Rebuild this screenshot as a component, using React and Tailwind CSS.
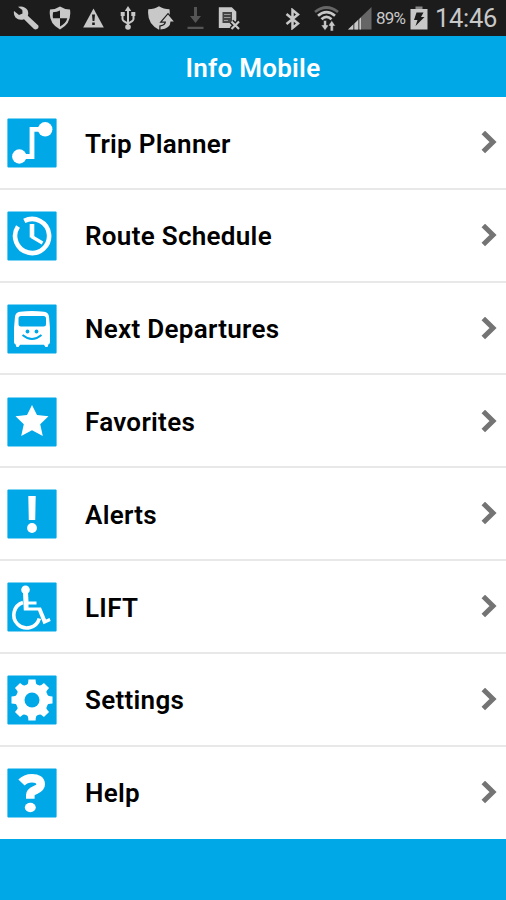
const items = [
  { label: "Trip Planner", icon: TripIcon },
  { label: "Route Schedule", icon: ClockIcon },
  { label: "Next Departures", icon: BusIcon },
  { label: "Favorites", icon: StarIcon },
  { label: "Alerts", icon: AlertIcon },
  { label: "LIFT", icon: WheelchairIcon },
  { label: "Settings", icon: GearIcon },
  { label: "Help", icon: HelpIcon },
];

function TripIcon() {
  return (
    <>
      <path d="M12 38.500h13V11.300H38" fill="none" stroke="#fff" strokeWidth="4.800" />
      <circle cx="12.300" cy="38.500" r="7.200" fill="#fff" />
      <circle cx="38.200" cy="11.300" r="7.200" fill="#fff" />
    </>
  );
}

function ClockIcon() {
  return (
    <g fill="none" stroke="#fff">
      <path d="M17.300 9.900A17 17 0 1 1 11 15.500" strokeWidth="4.600" />
      <path d="M25 13v13.500" strokeWidth="4.600" />
      <path d="M24.500 25.500l11 6.500" strokeWidth="3.200" />
    </g>
  );
}

function BusIcon() {
  return (
    <>
      <path
        d="M13 7.800Q25 6 37 7.800Q41.500 8.500 42 12.500L43 24V38Q43 40 41.500 40.300L40.500 43H38.500L37 40.800H13L11.500 43H9.500L8.500 40.300Q7 40 7 38V24L8 12.500Q8.500 8.500 13 7.800Z"
        fill="#fff"
      />
      <rect x="11.500" y="12" width="27.500" height="10.500" rx="2.500" fill="#00a8e8" />
      <circle cx="20.500" cy="27.500" r="1.900" fill="#00a8e8" />
      <circle cx="29.500" cy="27.500" r="1.900" fill="#00a8e8" />
      <path d="M15.500 31q9.500 8 19 0" fill="none" stroke="#00a8e8" strokeWidth="2" />
    </>
  );
}

function StarIcon() {
  return (
    <path
      d="M25 8L30 18L41.500 19.300L33.200 27.300L35.800 39L25 33.300L14.200 39L16.800 27.300L8.500 19.300L20 18Z"
      fill="#fff"
    />
  );
}

function AlertIcon() {
  return (
    <>
      <path d="M21.300 7h7.400l-.5 24h-6.400z" fill="#fff" />
      <circle cx="25" cy="39" r="4.900" fill="#fff" />
    </>
  );
}

function WheelchairIcon() {
  return (
    <>
      <circle cx="18.500" cy="7.800" r="4.300" fill="#fff" />
      <path d="M16 10h5l.5 9.500h8v3h-8v3H34l5 12l3.500-1.500l1.200 3l-7.200 3.200L31 28.500H16.800z" fill="#fff" />
      <path d="M16 20.500A13 13 0 1 0 32.300 36.500" fill="none" stroke="#fff" strokeWidth="3.600" />
    </>
  );
}

function GearIcon() {
  return (
    <>
      <circle cx="25" cy="25" r="16.300" fill="#fff" />
      {[0, 45, 90, 135, 180, 225, 270, 315].map((a) => (
        <path key={a} d="M19 11Q21.400 9.500 21.400 4.500h7.200Q28.600 9.500 31 11z" fill="#fff" transform={`rotate(${a} 25 25)`} />
      ))}
      <circle cx="25" cy="25" r="7.500" fill="#00a8e8" />
    </>
  );
}

function HelpIcon() {
  return (
    <>
      <path
        d="M14.500 14.500Q18.500 10.200 25 10.200C30.500 10.200 33.700 12.500 33.700 16.500C33.700 22.500 23.300 21.500 23.300 27V30.800"
        fill="none"
        stroke="#fff"
        strokeWidth="8.600"
      />
      <ellipse cx="23.300" cy="39.500" rx="5.500" ry="4.700" fill="#fff" />
    </>
  );
}

function StatusBar() {
  return (
    <div className="flex h-9 items-center bg-[#1c1c1c] text-[#c8c8c8]">
      {/* wrench */}
      <svg className="ml-[13px] h-6 w-[26px]" viewBox="0 0 26 24" fill="currentColor">
        <path d="M5 .8Q11-.8 14.500 4Q15.800 7 14.800 9.800L25.300 19.500Q26 21.500 24.500 22.800Q22.500 24 21 23L11 13.300Q6 15 2.500 11.500Q.3 9 1 5L6 9L9.500 7.500L9.300 4Z" />
      </svg>
      {/* shield */}
      <svg className="ml-[10px] h-6 w-[22px]" viewBox="0 0 22 24">
        <path d="M11 .5Q15.500 3.500 21 3.500Q23 17.500 11 23.500Q-1 17.500 1 3.500Q6.500 3.500 11 .5Z" fill="currentColor" />
        <path d="M11 4.500v7.800H4Q3.500 10 4 6.300Q8 6.300 11 4.500ZM11 12.300h7.300Q17 17.500 11 20.500Z" fill="#1c1c1c" />
      </svg>
      {/* warning */}
      <svg className="ml-3 h-6 w-[21px]" viewBox="0 0 21 24">
        <path d="M10.500 2.500L20.800 21.500H.2Z" fill="currentColor" />
        <path d="M9 8.500h3l-.6 6.500H9.600zM9.200 16.500h2.600V19H9.200z" fill="#1c1c1c" />
      </svg>
      {/* usb */}
      <svg className="ml-4 h-6 w-[16px]" viewBox="0 0 15 24" fill="none" stroke="currentColor" strokeWidth="2">
        <path d="M7.500 3v18M2 8v5q0 2 5.500 4.500M13 8v5q0 2-5.500 4.500" />
        <path d="M7.500 0L10.700 5H4.300z" fill="currentColor" stroke="none" />
        <circle cx="7.500" cy="21" r="2.800" fill="currentColor" stroke="none" />
        <path d="M.2 6h4v4h-4zM10.800 6h4v4h-4z" fill="currentColor" stroke="none" />
      </svg>
      {/* shield with arrow */}
      <svg className="ml-3 h-6 w-[26px]" viewBox="0 0 26 24">
        <path d="M11 .3Q15.500 3.300 21.500 3.300Q23.500 17.500 11 23.700Q-1.500 17.500.300 3.300Q6.500 3.300 11 .3Z" fill="currentColor" />
        <path
          d="M12.500 23.500Q22.500 22.500 22.500 15.500h3.300L20 8.500l-6 7h4Q18 19.500 12.500 20.500z"
          fill="currentColor"
          stroke="#1c1c1c"
          strokeWidth="2.400"
          paintOrder="stroke"
        />
      </svg>
      {/* download */}
      <svg className="ml-[13px] h-6 w-[17px]" viewBox="0 0 17 24" fill="#555">
        <path d="M7 1h3v9h4l-5.500 7L3 10h4zM.5 20.800h16V23H.5z" />
      </svg>
      {/* sim removed */}
      <svg className="ml-[14px] h-6 w-[22px]" viewBox="0 0 22 24">
        <path d="M.8 1.200h13l4.500 4.500V22H.8z" fill="currentColor" />
        <path d="M4.500 6h9.500v11H4.500z" fill="#444" />
        <path d="M6 8.500h6.500M6 11.500h6.500M6 14.500h4" stroke="#999" />
        <path d="M13.500 15.500l7.500 7.500M21 15.500L13.500 23" stroke="#1c1c1c" strokeWidth="5" />
        <path d="M13.500 15.500l7.500 7.500M21 15.500L13.500 23" stroke="currentColor" strokeWidth="2.200" />
      </svg>
      {/* bluetooth */}
      <svg className="ml-[45px] mt-0.5 h-[22px] w-[15px]" viewBox="0 0 15 22" fill="none" stroke="currentColor" strokeWidth="2.500">
        <path d="M1.500 6L13 15.500L7.500 20V2L13 6.500L1.500 16" />
      </svg>
      {/* wifi */}
      <svg className="ml-[14px] h-[25px] w-[25px]" viewBox="0 0 25 25" fill="none" strokeWidth="2.700">
        <path d="M1 6Q12.500-3 24 6" stroke="#666" />
        <path d="M4 9.800Q12.500 2.500 21 9.800M7.500 13.300Q12.500 8.500 17.500 13.300" stroke="currentColor" />
        <path d="M9.600 14.500V19H7l4 5.500l4-5.500h-2.500v-4.500zM16.300 25v-5H14l3.800-5.500l3.700 5.500h-2.200v5z" fill="currentColor" stroke="#1c1c1c" strokeWidth=".5" />
      </svg>
      {/* signal */}
      <svg className="ml-[9px] h-[23px] w-[24px]" viewBox="0 0 24 23">
        <path d="M0 22.500L23.500 0v22.500z" fill="#666" />
        <path d="M0 22.500l5-4.800v4.800zM6.500 22.500v-6l3.500-3.400v9.400zM11.500 22.500V12l1.500-1.500v12z" fill="currentColor" />
      </svg>
      <span className="ml-1 mt-0.5 w-[31px] text-[17px] tracking-[-0.8px]">89%</span>
      {/* battery */}
      <svg className="ml-[3px] h-6 w-[18px]" viewBox="0 0 18 24">
        <path d="M5.500.5h7V3H5.500z" fill="#888" />
        <path d="M.5 3h17v20.500H.5z" fill="currentColor" />
        <path d="M6.500 6.500h7L11 11h3.500L5.500 20l2-6H4z" fill="#1c1c1c" />
      </svg>
      <span className="ml-[7px] text-[25.500px] tracking-[-0.3px]">14:46</span>
    </div>
  );
}

function MenuRow({ item }) {
  const Icon = item.icon;
  return (
    <li className="flex h-[92.8px] items-center border-b-2 border-[#e8e8e8] bg-white pl-[7px] pr-[9px] pt-[1.5px] last:border-white">
      <svg className="h-[50px] w-[50px] shrink-0" viewBox="0 0 50 50">
        <rect x=".4" y=".4" width="49.200" height="49.200" rx="1" fill="#00a8e8" />
        <Icon />
      </svg>
      <span className="ml-7 pt-[2px] text-[26px] font-semibold tracking-[0.3px] text-black">{item.label}</span>
      <svg className="ml-auto h-6 w-4" viewBox="0 0 16 24" fill="none" stroke="#747474" strokeWidth="5">
        <path d="M2.300 1.500L12 11L2.300 20.500" />
      </svg>
    </li>
  );
}

export default function App() {
  return (
    <div className="flex h-[900px] w-[506px] flex-col overflow-hidden bg-[#00a8e8] font-['Roboto',sans-serif]">
      <StatusBar />
      <header className="flex h-[61px] items-center justify-center pt-1">
        <h1 className="text-[26px] font-semibold tracking-[0.250px] text-white">Info Mobile</h1>
      </header>
      <ul>
        {items.map((item) => (
          <MenuRow key={item.label} item={item} />
        ))}
      </ul>
    </div>
  );
}
